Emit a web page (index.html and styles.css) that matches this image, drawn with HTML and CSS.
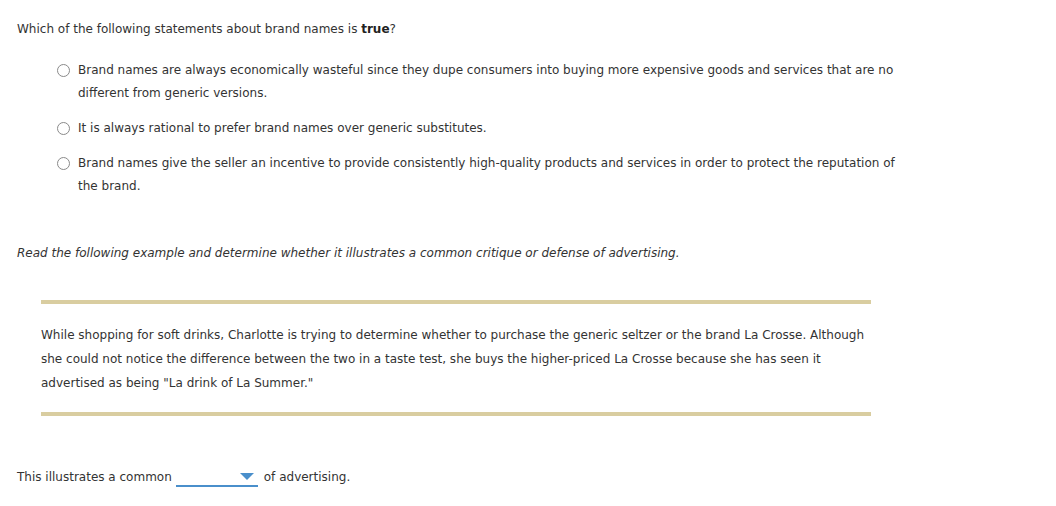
FILE: index.html
```html
<!DOCTYPE html>
<html>
<head>
<meta charset="utf-8">
<link rel="stylesheet" href="styles.css">
</head>
<body>
<div class="page">
  <p class="question">Which of the following statements about brand names is <b>true</b>?</p>
  <ul class="options">
    <li class="option"><span class="radio"></span><span class="label">Brand names are always economically wasteful since they dupe consumers into buying more expensive goods and services that are no different from generic versions.</span></li>
    <li class="option"><span class="radio"></span><span class="label">It is always rational to prefer brand names over generic substitutes.</span></li>
    <li class="option"><span class="radio"></span><span class="label">Brand names give the seller an incentive to provide consistently high-quality products and services in order to protect the reputation of the brand.</span></li>
  </ul>
  <p class="instruction">Read the following example and determine whether it illustrates a common critique or defense of advertising.</p>
  <div class="example">
    <p>While shopping for soft drinks, Charlotte is trying to determine whether to purchase the generic seltzer or the brand La Crosse. Although she could not notice the difference between the two in a taste test, she buys the higher-priced La Crosse because she has seen it advertised as being "La drink of La Summer."</p>
  </div>
  <p class="answer">This illustrates a common <span class="select"><svg class="caret" width="14" height="8" viewBox="0 0 14 8"><polygon points="0,0 14,0 7,7" fill="#4a8fcb"/></svg></span> of advertising.</p>
</div>
</body>
</html>
```

FILE: styles.css
```css
html, body {
  margin: 0;
  padding: 0;
  background: #ffffff;
}
.page {
  font-family: "DejaVu Sans", Verdana, sans-serif;
  font-size: 12px;
  color: #333333;
  padding: 17px 0 0 17px;
  width: 1000px;
}
.question {
  margin: 0;
  line-height: 24px;
}
.question b {
  font-weight: bold;
  color: #222;
}
.options {
  list-style: none;
  margin: 18px 0 0 0;
  padding: 0 0 0 40px;
  width: 845px;
}
.option {
  display: flex;
  align-items: flex-start;
  line-height: 23px;
  margin-bottom: 12px;
}
.radio {
  flex: none;
  width: 11px;
  height: 11px;
  border: 1px solid #8a8a8a;
  border-radius: 50%;
  margin: 5px 8px 0 0;
}
.instruction {
  margin: 43px 0 0 0;
  font-style: italic;
  line-height: 24px;
}
.example {
  margin: 35px 0 0 24px;
  width: 830px;
  border-top: 4px solid #d9cda0;
  border-bottom: 4px solid #d9cda0;
  padding: 19px 0 17px 0;
}
.example p {
  margin: 0;
  line-height: 24px;
}
.answer {
  margin: 49px 0 0 0;
  line-height: 24px;
  display: flex;
  align-items: center;
}
.select {
  display: inline-block;
  width: 82px;
  height: 17px;
  border-bottom: 2px solid #4a8fcb;
  margin: 0 6px 0 4px;
  position: relative;
}
.caret {
  position: absolute;
  right: 4px;
  top: 5px;
}
```
